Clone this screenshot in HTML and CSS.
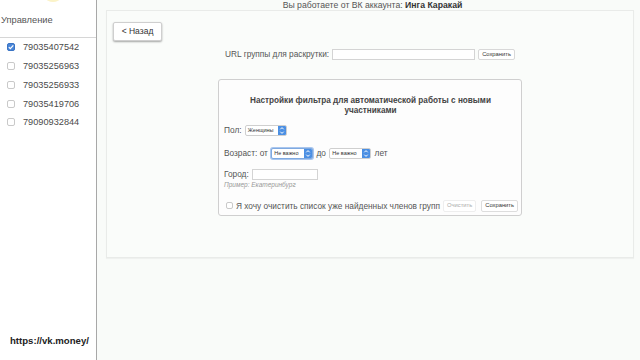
FILE: index.html
```html
<!DOCTYPE html>
<html lang="ru">
<head>
<meta charset="utf-8">
<title>vk.money</title>
<link rel="stylesheet" href="styles.css">
</head>
<body>
<div class="app">
  <aside class="sidebar">
    <div class="side-head"><span class="logo-bit"></span>Управление</div>
    <ul class="accounts">
      <li><span class="cb checked"><svg viewBox="0 0 8 8" width="8" height="8"><path d="M1.8 4.2 L3.3 5.7 L6.3 2.3" fill="none" stroke="#fff" stroke-width="1.2"/></svg></span>79035407542</li>
      <li><span class="cb"></span>79035256963</li>
      <li><span class="cb"></span>79035256933</li>
      <li><span class="cb"></span>79035419706</li>
      <li><span class="cb"></span>79090932844</li>
    </ul>
    <div class="site-link">https://vk.money/</div>
  </aside>
  <main class="main">
    <div class="account-line">Вы работаете от ВК аккаунта: <b>Инга Каракай</b></div>
    <section class="panel">
      <div class="back-row"><button class="back-btn">&lt; Назад</button></div>
      <div class="url-row">
        <span class="url-label">URL группы для раскрутки:</span>
        <span class="input url-input"></span>
        <button class="small-btn">Сохранить</button>
      </div>
      <div class="filter">
        <div class="filter-title">Настройки фильтра для автоматической работы с новыми участниками</div>
        <div class="frow sex-row">Пол: <span class="select"><span class="sel-text">Женщины</span><span class="sel-arrow"><svg viewBox="0 0 8 11" width="8" height="11"><path d="M2.3 4.3 L4 2.6 L5.7 4.3 M2.3 6.7 L4 8.4 L5.7 6.7" fill="none" stroke="#fff" stroke-width="1"/></svg></span></span></div>
        <div class="frow age-row">Возраст: от <span class="select wide focus"><span class="sel-text">Не важно</span><span class="sel-arrow"><svg viewBox="0 0 8 11" width="8" height="11"><path d="M2.3 4.3 L4 2.6 L5.7 4.3 M2.3 6.7 L4 8.4 L5.7 6.7" fill="none" stroke="#fff" stroke-width="1"/></svg></span></span> до <span class="select wide"><span class="sel-text">Не важно</span><span class="sel-arrow"><svg viewBox="0 0 8 11" width="8" height="11"><path d="M2.3 4.3 L4 2.6 L5.7 4.3 M2.3 6.7 L4 8.4 L5.7 6.7" fill="none" stroke="#fff" stroke-width="1"/></svg></span></span> лет</div>
        <div class="frow city-row">Город: <span class="input city-input"></span></div>
        <div class="hint">Пример: Екатеринбург</div>
        <div class="frow clear-row">
          <span class="cb small"></span>
          <span class="clear-text">Я хочу очистить список уже найденных членов групп</span>
          <button class="small-btn faint">Очистить</button>
          <button class="small-btn save2">Сохранить</button>
        </div>
      </div>
    </section>
  </main>
</div>
</body>
</html>
```
FILE: styles.css
```css
* { box-sizing: border-box; }
html, body { margin: 0; padding: 0; }
body {
  width: 640px;
  height: 360px;
  overflow: hidden;
  font-family: "Liberation Sans", Arial, sans-serif;
  background: #f9fbf9;
  color: #444;
}
.app { display: flex; height: 360px; }

.sidebar {
  width: 97px;
  flex: none;
  background: #fff;
  border-right: 1px solid #a8a8a8;
  display: flex;
  flex-direction: column;
  position: relative;
}
.side-head {
  height: 38px;
  border-bottom: 1px solid #d6d6d6;
  font-size: 9.3px;
  color: #555;
  padding: 15px 0 0 1px;
  line-height: 11px;
  position: relative;
}
.logo-bit {
  position: absolute;
  left: 46px;
  top: -6px;
  width: 14px;
  height: 8px;
  border-radius: 50%;
  background: #fbf3c8;
}
.accounts { list-style: none; margin: 0; padding: 0; }
.accounts li {
  height: 18.75px;
  display: flex;
  align-items: center;
  font-size: 9.2px;
  color: #4a4a4a;
  padding-left: 7px;
}
.cb {
  width: 8px;
  height: 8px;
  border: 1px solid #c9c9c9;
  border-radius: 2px;
  background: #fff;
  margin-right: 8px;
  flex: none;
  display: inline-block;
}
.cb.checked { background: #4a86d8; border-color: #3a74c4; }
.cb svg { display: block; margin: -1px; }
.site-link {
  margin-top: auto;
  font-size: 9.6px;
  font-weight: bold;
  color: #222;
  padding: 0 0 14px 10px;
}

.main { flex: 1; display: flex; flex-direction: column; }
.account-line {
  height: 9px;
  font-size: 8.7px;
  line-height: 10px;
  color: #555;
  text-align: center;
  padding-left: 8px;
}
.account-line b { color: #333; }
.panel {
  margin: 1px 6px 0 9px;
  height: 248px;
  background: #fafcfa;
  border: 1px solid #e9ebe9;
  box-shadow: 0 1px 1px rgba(0,0,0,0.04);
  display: flex;
  flex-direction: column;
}
.back-row { padding: 9px 0 0 6px; }
.back-btn {
  width: 49px;
  height: 19px;
  font-family: inherit;
  font-size: 8.5px;
  color: #333;
  background: #fff;
  border: 1px solid #cfcfcf;
  border-radius: 2px;
  box-shadow: 0 1px 2px rgba(0,0,0,0.35);
  padding: 0;
  text-align: center;
}
.url-row {
  display: flex;
  align-items: center;
  justify-content: center;
  margin-top: 8px;
  height: 11px;
  font-size: 8.3px;
  color: #555;
}
.url-label { margin-right: 3px; }
.input {
  display: inline-block;
  background: #fff;
  border: 1px solid #d4d4d4;
  height: 11px;
}
.url-input { width: 143px; }
.small-btn {
  font-family: inherit;
  font-size: 5.8px;
  color: #333;
  background: #fff;
  border: 1px solid #d8d8d8;
  border-radius: 2px;
  height: 11px;
  padding: 0 3px;
  margin-left: 3px;
  line-height: 9px;
}
.filter {
  margin: 19px auto 0;
  width: 304px;
  height: 137px;
  background: #fdfdfd;
  border: 1px solid #cfcfcf;
  border-radius: 3px;
  padding: 16px 0 0 5px;
  font-size: 8.3px;
  color: #555;
}
.filter-title {
  font-weight: bold;
  font-size: 8.2px;
  line-height: 10px;
  color: #444;
  text-align: center;
  padding: 0 14px 0 10px;
}
.frow { display: flex; align-items: center; white-space: pre; }
.sex-row { margin-top: 9px; height: 11px; }
.select {
  display: inline-flex;
  align-items: stretch;
  height: 11px;
  width: 42px;
  background: #fff;
  border: 1px solid #cfcfcf;
  border-radius: 2px;
  margin: 0 1px;
  overflow: hidden;
}
.select.wide { width: 42px; }
.select.focus { border-color: #7fa9e0; box-shadow: 0 0 0 1px #a9c6ee; }
.sel-text {
  flex: 1;
  font-size: 5.5px;
  line-height: 9px;
  color: #333;
  padding-left: 2px;
}
.sel-arrow {
  width: 8px;
  background: #4b8fe3;
  display: flex;
  align-items: center;
  justify-content: center;
}
.sel-arrow svg { display: block; }
.age-row { margin-top: 12px; height: 11px; }
.city-row { margin-top: 10px; height: 11px; }
.city-input { width: 66px; height: 11px; margin-left: 1px; }
.hint {
  font-size: 6.5px;
  font-style: italic;
  color: #999;
  margin-top: 1px;
  line-height: 8px;
}
.clear-row { margin-top: 11px; height: 12px; padding-left: 2px; }
.cb.small { width: 7px; height: 7px; margin-right: 3px; }
.clear-text { font-size: 8.3px; color: #555; }
.small-btn.faint { color: #aaa; border-color: #eee; height: 12px; }
.small-btn.save2 { margin-left: 5px; height: 12px; border-color: #ddd; }
```
